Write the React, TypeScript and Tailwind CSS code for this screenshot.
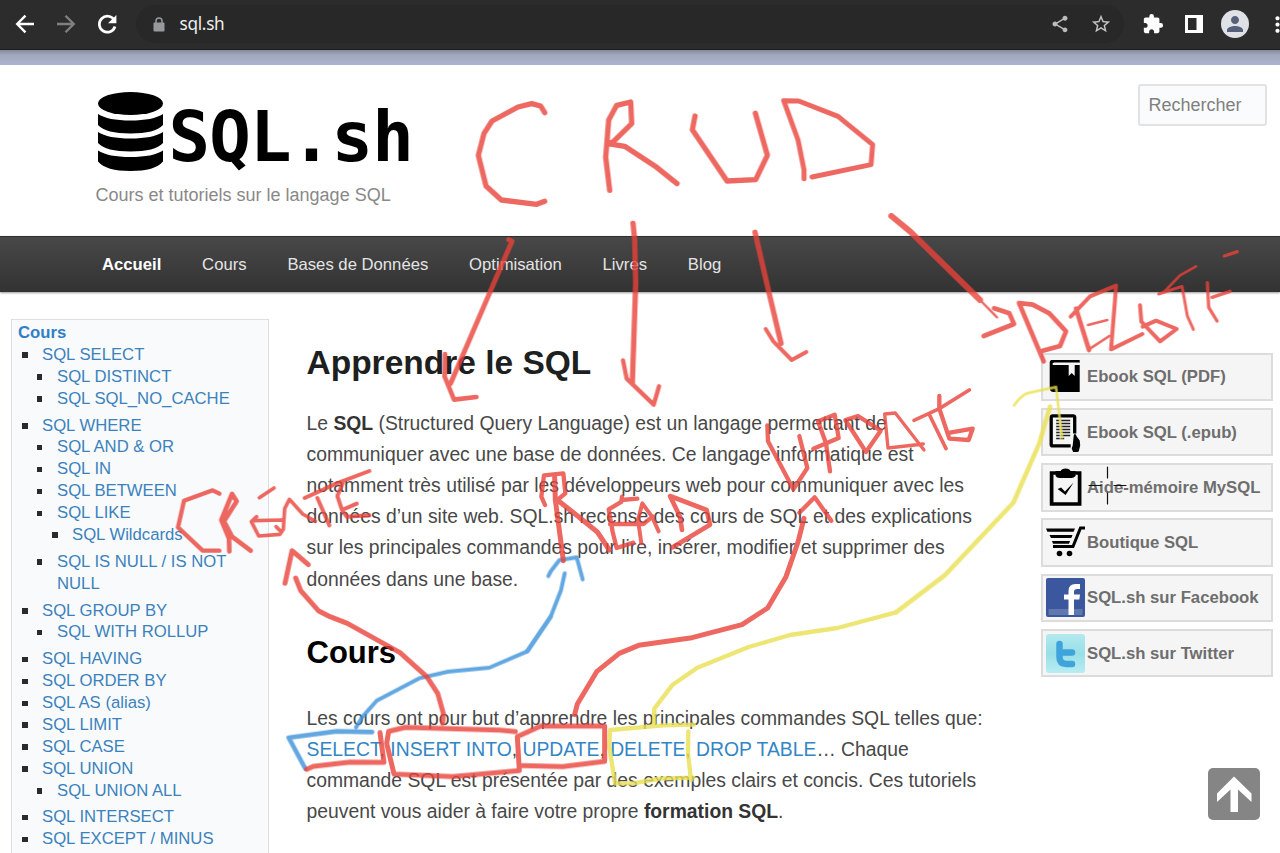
import React from 'react';
import { MdShare, MdStarBorder, MdExtension, MdMoreVert, MdPerson } from 'react-icons/md';

type Item = { label: string; level: 1 | 2 | 3; gap?: boolean };

const menu: Item[] = [
  { label: 'SQL SELECT', level: 1 },
  { label: 'SQL DISTINCT', level: 2 },
  { label: 'SQL SQL_NO_CACHE', level: 2, gap: true },
  { label: 'SQL WHERE', level: 1 },
  { label: 'SQL AND & OR', level: 2 },
  { label: 'SQL IN', level: 2 },
  { label: 'SQL BETWEEN', level: 2 },
  { label: 'SQL LIKE', level: 2 },
  { label: 'SQL Wildcards', level: 3, gap: true },
  { label: 'SQL IS NULL / IS NOT NULL', level: 2, gap: true },
  { label: 'SQL GROUP BY', level: 1 },
  { label: 'SQL WITH ROLLUP', level: 2, gap: true },
  { label: 'SQL HAVING', level: 1 },
  { label: 'SQL ORDER BY', level: 1 },
  { label: 'SQL AS (alias)', level: 1 },
  { label: 'SQL LIMIT', level: 1 },
  { label: 'SQL CASE', level: 1 },
  { label: 'SQL UNION', level: 1 },
  { label: 'SQL UNION ALL', level: 2, gap: true },
  { label: 'SQL INTERSECT', level: 1 },
  { label: 'SQL EXCEPT / MINUS', level: 1 },
];

const indent = { 1: 'pl-[10px]', 2: 'pl-[24.5px]', 3: 'pl-[40px]' };
const bulletGap = { 1: 'gap-[14.5px]', 2: 'gap-[15px]', 3: 'gap-[14.5px]' };

function Sidebar() {
  return (
    <aside className="ml-[11px] mt-[27px] h-[600px] w-[258px] shrink-0 border border-[#dcdee0] bg-[#f9fafb] pt-[2px] text-[16.7px] leading-[21.88px] text-[#3b82bd]">
      <div className="pl-[6px] font-bold text-[#2f80c8]">Cours</div>
      <ul>
        {menu.map((m) => (
          <li key={m.label} className={`flex items-start ${indent[m.level]} ${bulletGap[m.level]} ${m.gap ? 'mb-[5px]' : ''}`}>
            <span className="mt-[8.5px] size-[5.5px] shrink-0 bg-[#2b2b2b]" />
            <span className="max-w-[185px]">{m.label}</span>
          </li>
        ))}
      </ul>
    </aside>
  );
}

function BookIcon() {
  return (
    <svg viewBox="1.3 0 39 39" className="size-[39px]">
      <path d="M7 3h28v3H8v2h27v27H9q-4 0-4-4V6q0-3 2-3z" fill="#000" />
      <path d="M9 5.500h26v2H9z M24 8h6v11l-3-3-3 3z" fill="#f5f5f5" />
    </svg>
  );
}

function EpubIcon() {
  return (
    <svg viewBox="1.3 1.6 39 39" className="size-[39px]">
      <path d="M30 22V6q0-1.500-1.500-1.500H8q-1.500 0-1.500 1.500V33q0 1.500 1.500 1.500h18" fill="none" stroke="#000" strokeWidth="3.300" />
      <path d="M11.500 9h14M11.500 12h14M11.500 15h14M11.500 18h14M11.500 21h14M11.500 24h14M11.500 27h8" stroke="#222" strokeWidth="1.500" />
      <path d="M15.500 8v20" stroke="#f5f5f5" strokeWidth=".9" />
      <path d="M29 24q1.500-3 3 1l3 4 .5 5-1.500 6-5 2-2-5 1-3z" fill="#000" />
    </svg>
  );
}

function ClipboardIcon() {
  return (
    <svg viewBox="0.4 0 39 39" className="size-[39px]">
      <path d="M6 5h28v31H6z" fill="none" stroke="#000" strokeWidth="3.700" />
      <path d="M10 3h5q1-2.500 5-2.500T25 3h5v5q-2 2-4 2H14q-3 0-4-2z" fill="#000" />
      <path d="M12 21l3.500-1.500 3.800 4L28 14.500 20 27z" fill="#000" />
    </svg>
  );
}

function CartIcon() {
  return (
    <svg viewBox="0 0 39 39" className="size-[39px]">
      <path d="M39 5h-4.500L27 23.500H7" fill="none" stroke="#000" strokeWidth="3" />
      <path d="M0 5.500h29l-1.400 3.200H1.400z M3.500 12h23l-1.200 3H5z M6 18h18l-1 2.800H7z" fill="#000" />
      <circle cx="13.500" cy="30.500" r="2.800" />
      <circle cx="23.500" cy="30.500" r="2.800" />
    </svg>
  );
}

function FacebookIcon() {
  return (
    <svg viewBox="0 0 39 39" className="size-[39px]">
      <rect width="39" height="39" rx="2" fill="#3b579d" />
      <path d="M2.500 31h34v6h-34z" fill="#6078ae" />
      <path d="M22.500 37V21.500H18v-5h4.500V13q0-7 7-7H34v5h-3q-3 0-3 3v2.500h6l-.7 5H28V37z" fill="#fff" />
    </svg>
  );
}

function TwitterIcon() {
  return (
    <svg viewBox="0 0 39 39" className="size-[39px]">
      <defs>
        <linearGradient id="tw" x1="0" y1="0" x2="0" y2="1">
          <stop offset="0" stopColor="#b4e9ee" />
          <stop offset=".5" stopColor="#98dfe8" />
          <stop offset="1" stopColor="#b8edf2" />
        </linearGradient>
      </defs>
      <rect width="39" height="39" rx="3" fill="url(#tw)" />
      <path d="M13.500 10v13q0 7 7 7h5.500M13.500 18.500H26" fill="none" stroke="#3fa3dc" strokeWidth="6.500" strokeLinecap="round" strokeLinejoin="round" />
    </svg>
  );
}

const shortcuts = [
  { label: 'Ebook SQL (PDF)', Icon: BookIcon },
  { label: 'Ebook SQL (.epub)', Icon: EpubIcon },
  { label: 'Aide-mémoire MySQL', Icon: ClipboardIcon },
  { label: 'Boutique SQL', Icon: CartIcon },
  { label: 'SQL.sh sur Facebook', Icon: FacebookIcon },
  { label: 'SQL.sh sur Twitter', Icon: TwitterIcon },
];

function Annotations() {
  return (
    <svg viewBox="0 0 1280 853" className="pointer-events-none absolute inset-0 h-[853px] w-[1280px]" fill="none" strokeLinecap="round" strokeLinejoin="round">
      <g stroke="#3d92da" opacity=".8">
        <g transform="translate(270 630) scale(.33333)" strokeWidth="12">
          <path d="M258 292L276 262L320 212L450 144L534 125L658 113L772 64L842 -40" />
          <path d="M306 306L200 304L56 323L106 416" strokeWidth="14" />
        </g>
        <g transform="translate(480 370) scale(.33333)" strokeWidth="12">
          <path d="M142 843L212 740L243 660L254 610" />
          <path d="M205 618L212 604L238 570L290 562L308 628" />
        </g>
      </g>
      <g stroke="#eae052" opacity=".8">
        <g transform="translate(600 600) scale(.33333)" strokeWidth="13">
          <path d="M162 370L163 326L218 254L292 203L446 141L570 105L712 84L888 37" />
          <path d="M282 374L190 376L30 390L28 440L45 550L100 550L180 536L280 533" />
          <path d="M265 394L264 460L273 540" />
        </g>
        <g transform="translate(750 370) scale(.33333)" strokeWidth="14">
          <path d="M438 727L585 615L790 398L868 220L888 150L900 110" />
          <path d="M792 106Q812 78 830 70L918 51L936 203" strokeWidth="8" />
        </g>
      </g>
      <g stroke="#ea433b" opacity=".8">
        <g transform="translate(430 70) scale(.33333)" strokeWidth="16">
          <path d="M344 128L332 108L305 101L264 111L186 153L162 190L145 256L168 348L214 390L320 403L344 394" />
          <path d="M539 361L527 262L536 150L560 106L602 96L605 161L550 215L534 221L584 229L680 292L741 341" />
          <path d="M795 138L787 179L891 333L977 329L1012 256L976 130" />
          <path d="M1122 326L1122 300L1104 210L1061 92L1106 93L1224 139L1328 224L1323 284L1146 321" strokeWidth="15" />
          <path d="M236 509L246 514L215 585L62 940" strokeWidth="15" />
          <path d="M45 852L44 920L72 989L139 981" strokeWidth="14" />
          <path d="M609 460L614 510L617 640L607 938" strokeWidth="16" />
          <path d="M579 871L590 926L671 1004L687 949" strokeWidth="13" />
          <path d="M975 487L1015 660L1053 820" strokeWidth="16" />
          <path d="M1007 777L1030 814L1085 870L1129 846" strokeWidth="12" />
        </g>
        <g transform="translate(860 0) scale(.33333)" strokeWidth="12">
          <path d="M94 648L150 694L360 900" strokeWidth="18" />
          <path d="M360 900L411 952" strokeWidth="7" />
          <path d="M402 925L448 940L462 972L371 1008" strokeWidth="14" />
          <path d="M551 1084L477 909L518 914L568 940L618 994L600 1038L548 1052" strokeWidth="14" />
          <path d="M632 950L690 889L768 857L765 900L753 1048L847 1002" />
          <path d="M648 926L687 1050" strokeWidth="14" />
          <path d="M684 975L742 960M690 1046L748 1008" strokeWidth="8" />
          <path d="M840 916L844 965L900 1024L950 987L888 962L848 980" />
          <path d="M1008 799L960 826L912 876" strokeWidth="8" />
          <path d="M896 882L966 859L982 948L1000 988" strokeWidth="9" />
          <path d="M1042 848L1046 922L1071 963M1056 892L1110 874M1093 768L1132 755" strokeWidth="10" />
        </g>
        <g transform="translate(160 440) scale(.33333)" strokeWidth="13">
          <path d="M178 161L158 151L72 182L54 262L128 332L178 332" />
          <path d="M208 334L207 296L184 240L216 162L230 184L192 244L216 290L272 332" strokeWidth="14" />
          <path d="M298 173L342 144M290 230L274 245L296 288L360 283L370 268L374 206L388 178L428 222L466 244M282 242L366 240M348 260L360 272" strokeWidth="11" />
          <path d="M434 174L530 130L628 93M472 174L508 256M548 130L532 168L546 210L590 191M546 210L560 230L628 226" strokeWidth="12" />
          <path d="M375 430L396 332L445 374" strokeWidth="15" />
          <path d="M407 414L422 452L475 512L510 530L562 550L720 638L800 710L833 760L850 820L848 850" strokeWidth="15" />
        </g>
        <g transform="translate(480 370) scale(.33333)" strokeWidth="13">
          <path d="M195 405L184 380L192 316L250 310L256 370L232 390" />
          <path d="M224 322L226 390L250 572M232 390L290 436L352 486L388 540" strokeWidth="15" />
          <path d="M426 380L424 396L386 418L398 486L410 534L460 518M424 390L472 386M390 462L490 462L518 440" />
          <path d="M484 520L474 450L487 400L516 440L536 484" strokeWidth="12" />
          <path d="M606 480L600 440L570 378L680 420L690 464L578 532" strokeWidth="14" />
          <path d="M284 1034L292 1002L350 905L418 850L476 826L636 803L786 764L863 714L918 620L954 516L972 445" strokeWidth="15" />
        </g>
        <g transform="translate(750 370) scale(.33333)" strokeWidth="13">
          <path d="M52 166L54 214L130 358L172 294L148 198" />
          <path d="M240 304L228 220L204 154L254 134L266 204L190 236" />
          <path d="M348 246L286 150L324 138L392 182L348 246" />
          <path d="M414 234L404 132L436 129L522 240M520 222L414 234" strokeWidth="10" />
          <path d="M492 151L568 116L658 60M540 138L588 236" strokeWidth="11" />
          <path d="M568 78L568 116L598 206L656 210L668 176L600 188" />
          <path d="M148 428L194 382L244 452" />
        </g>
        <g transform="translate(270 630) scale(.33333)" strokeWidth="15">
          <path d="M110 418L130 409L240 396L342 397L330 308" />
          <path d="M736 305L690 300L406 292L356 304L350 340L372 432L548 440L748 422L742 320L812 288L1004 288L1004 394L878 410L758 407" />
        </g>
      </g>
      <path d="M1107.500 467v11M1107.500 493v11M1089 485.500h12M1114 485.500h12" stroke="#111" strokeWidth="1.200" />
    </svg>
  );
}

export default function App() {
  return (
    <div className="relative flex h-[853px] w-[1280px] flex-col overflow-hidden bg-white font-['Liberation_Sans',Arial,sans-serif]">
      <div className="flex h-[50px] shrink-0 items-center border-b border-[#1c1c1c] bg-[#2c2c2c] pb-[1px] text-white">
        <svg viewBox="0 0 26 26" className="ml-[12px] size-[26px] shrink-0" fill="none" stroke="#fff" strokeWidth="2.400">
          <path d="M22 13H6M13.500 4.700L5.200 13l8.300 8.300" />
        </svg>
        <svg viewBox="0 0 26 26" className="ml-[15px] size-[26px] shrink-0" fill="none" stroke="#808080" strokeWidth="2.300">
          <path d="M4 13h16M12.500 4.700l8.300 8.300-8.300 8.300" />
        </svg>
        <svg viewBox="0 0 26 26" className="ml-[15px] size-[26px] shrink-0">
          <path d="M20.300 9.200A8 8 0 1 0 21 15.500" fill="none" stroke="#fff" strokeWidth="2.700" />
          <path d="M22.400 4v8.200H14z" fill="#fff" />
        </svg>
        <div className="ml-[16px] flex h-[38px] w-[988px] shrink-0 items-center rounded-full bg-[#282828]">
          <svg viewBox="0 0 12 15" className="ml-[17px] h-[15px] w-[12px] shrink-0">
            <path d="M3 6V4a3 3 0 0 1 6 0v2" fill="none" stroke="#96999e" strokeWidth="1.500" />
            <rect x=".5" y="5.500" width="11" height="9" rx="1" fill="#96999e" />
          </svg>
          <span className="ml-[14.500px] w-[45px] font-['Noto_Sans',sans-serif] text-[17.200px] tracking-[-0.300px] text-[#eee]">sql.sh</span>
          <MdShare className="ml-[825px] size-[20px] shrink-0 text-[#bcbcbc]" />
          <MdStarBorder className="ml-[20px] size-[22px] shrink-0 text-[#c4c4c4]" />
        </div>
        <MdExtension className="ml-[18px] size-[22px] shrink-0" />
        <svg viewBox="0 0 18 18" className="ml-[21px] size-[18px] shrink-0">
          <path d="M0 0h18v18H0z" fill="#fff" />
          <path d="M3 3h8.500v12H3z" fill="#2b2b2b" />
        </svg>
        <div className="ml-[18px] flex size-[28px] shrink-0 items-center justify-center rounded-full bg-[#dee1e6]">
          <MdPerson className="size-[24px] text-[#566078]" />
        </div>
        <MdMoreVert className="ml-[16px] size-[25px] shrink-0" />
      </div>
      <div className="h-[15px] shrink-0 bg-linear-to-b from-[#858b9c] via-[#a0a9c0] via-35% to-[#aab4ca]" />

      <header className="flex h-[171px] shrink-0 justify-between">
        <div className="pl-[95.500px] pt-[27px]">
          <div className="flex h-[80px]">
            <svg viewBox="0 0 65 79" className="ml-[2.500px] h-[79px] w-[65px]">
              <ellipse cx="32.500" cy="11.500" rx="32.500" ry="11.500" />
              <path d="M0 22q10 6.500 32.500 6.500T65 22v11q-8 8.500-32.500 8.500T0 33z" />
              <path d="M0 40q10 6.500 32.500 6.500T65 40v11q-8 8.500-32.500 8.500T0 51z" />
              <path d="M0 58.500q10 6.500 32.500 6.500T65 58.500v11q-8 9.500-32.500 9.500T0 69.500z" />
            </svg>
            <div className="ml-[5.500px] mt-[4.500px] font-['DejaVu_Sans_Mono',monospace] text-[69px] font-bold leading-[80px] tracking-[-0.800px] text-black">SQL.sh</div>
          </div>
          <div className="mt-[12px] text-[18px] leading-[22px] text-[#888]">Cours et tutoriels sur le langage SQL</div>
        </div>
        <div className="mr-[13px] mt-[19px] flex h-[42px] w-[129px] items-center rounded-[3px] border-2 border-[#e2e2e2] bg-[#fafbfc] pl-[8.500px] text-[18px] text-[#808080]">Rechercher</div>
      </header>

      <nav className="flex h-[56px] shrink-0 items-center gap-[40.800px] border-y border-[#303030] bg-linear-to-b from-[#484848] to-[#333] pl-[102px] pt-[1px] text-[16.680px] text-[#e4e4e4] shadow-[0_1px_2px_rgba(0,0,0,0.4)]">
        <span className="font-bold text-white">Accueil</span>
        <span>Cours</span>
        <span>Bases de Données</span>
        <span>Optimisation</span>
        <span>Livres</span>
        <span>Blog</span>
      </nav>

      <div className="flex min-h-0 flex-1 items-start">
        <Sidebar />
        <main className="ml-[37.500px] w-[734.500px] shrink-0 whitespace-nowrap text-[19.330px] leading-[31.200px] text-[#484848]">
          <h1 className="mt-[51px] text-[33.500px] font-bold leading-[40px] text-[#1d1f20]">Apprendre le SQL</h1>
          <p className="mt-[24.600px]">
            Le <b className="text-[#333]">SQL</b> (Structured Query Language) est un langage permettant de<br />
            communiquer avec une base de données. Ce langage informatique est<br />
            notamment très utilisé par les développeurs web pour communiquer avec les<br />
            données d’un site web. SQL.sh recense des cours de SQL et des explications<br />
            sur les principales commandes pour lire, insérer, modifier et supprimer des<br />
            données dans une base.
          </p>
          <h2 className="mt-[37.900px] text-[31px] font-bold leading-[40px] text-black">Cours</h2>
          <p className="mt-[30px]">
            Les cours ont pour but d’apprendre les principales commandes SQL telles que:<br />
            <span className="text-[#3386c5]">SELECT</span>, <span className="text-[#3386c5]">INSERT INTO</span>, <span className="text-[#3386c5]">UPDATE</span>, <span className="text-[#3386c5]">DELETE</span>, <span className="text-[#3386c5]">DROP TABLE</span>… Chaque<br />
            commande SQL est présentée par des exemples clairs et concis. Ces tutoriels<br />
            peuvent vous aider à faire votre propre <b className="text-[#333]">formation SQL</b>.
          </p>
        </main>
        <div className="mt-[60.500px] flex w-[231.500px] shrink-0 flex-col gap-[6.800px]">
          {shortcuts.map(({ label, Icon }) => (
            <div key={label} className="flex h-[48.500px] items-center gap-[2px] whitespace-nowrap border-2 border-[#dcdcdc] bg-[#f5f5f5] pl-[3px] text-[16.720px] font-bold text-[#6e6e6e]">
              <Icon />
              <span>{label}</span>
            </div>
          ))}
        </div>
      </div>

      <Annotations />

      <div className="absolute left-[1208px] top-[768px] size-[52px] rounded-[5px] bg-[#858585]">
        <svg viewBox="0 0 52 52" className="size-[52px]">
          <path d="M26 8.500L43.500 25.500V34L30 21.500V44H22.500V21.500L9 34V25.500z" fill="#fff" />
        </svg>
      </div>
    </div>
  );
}
